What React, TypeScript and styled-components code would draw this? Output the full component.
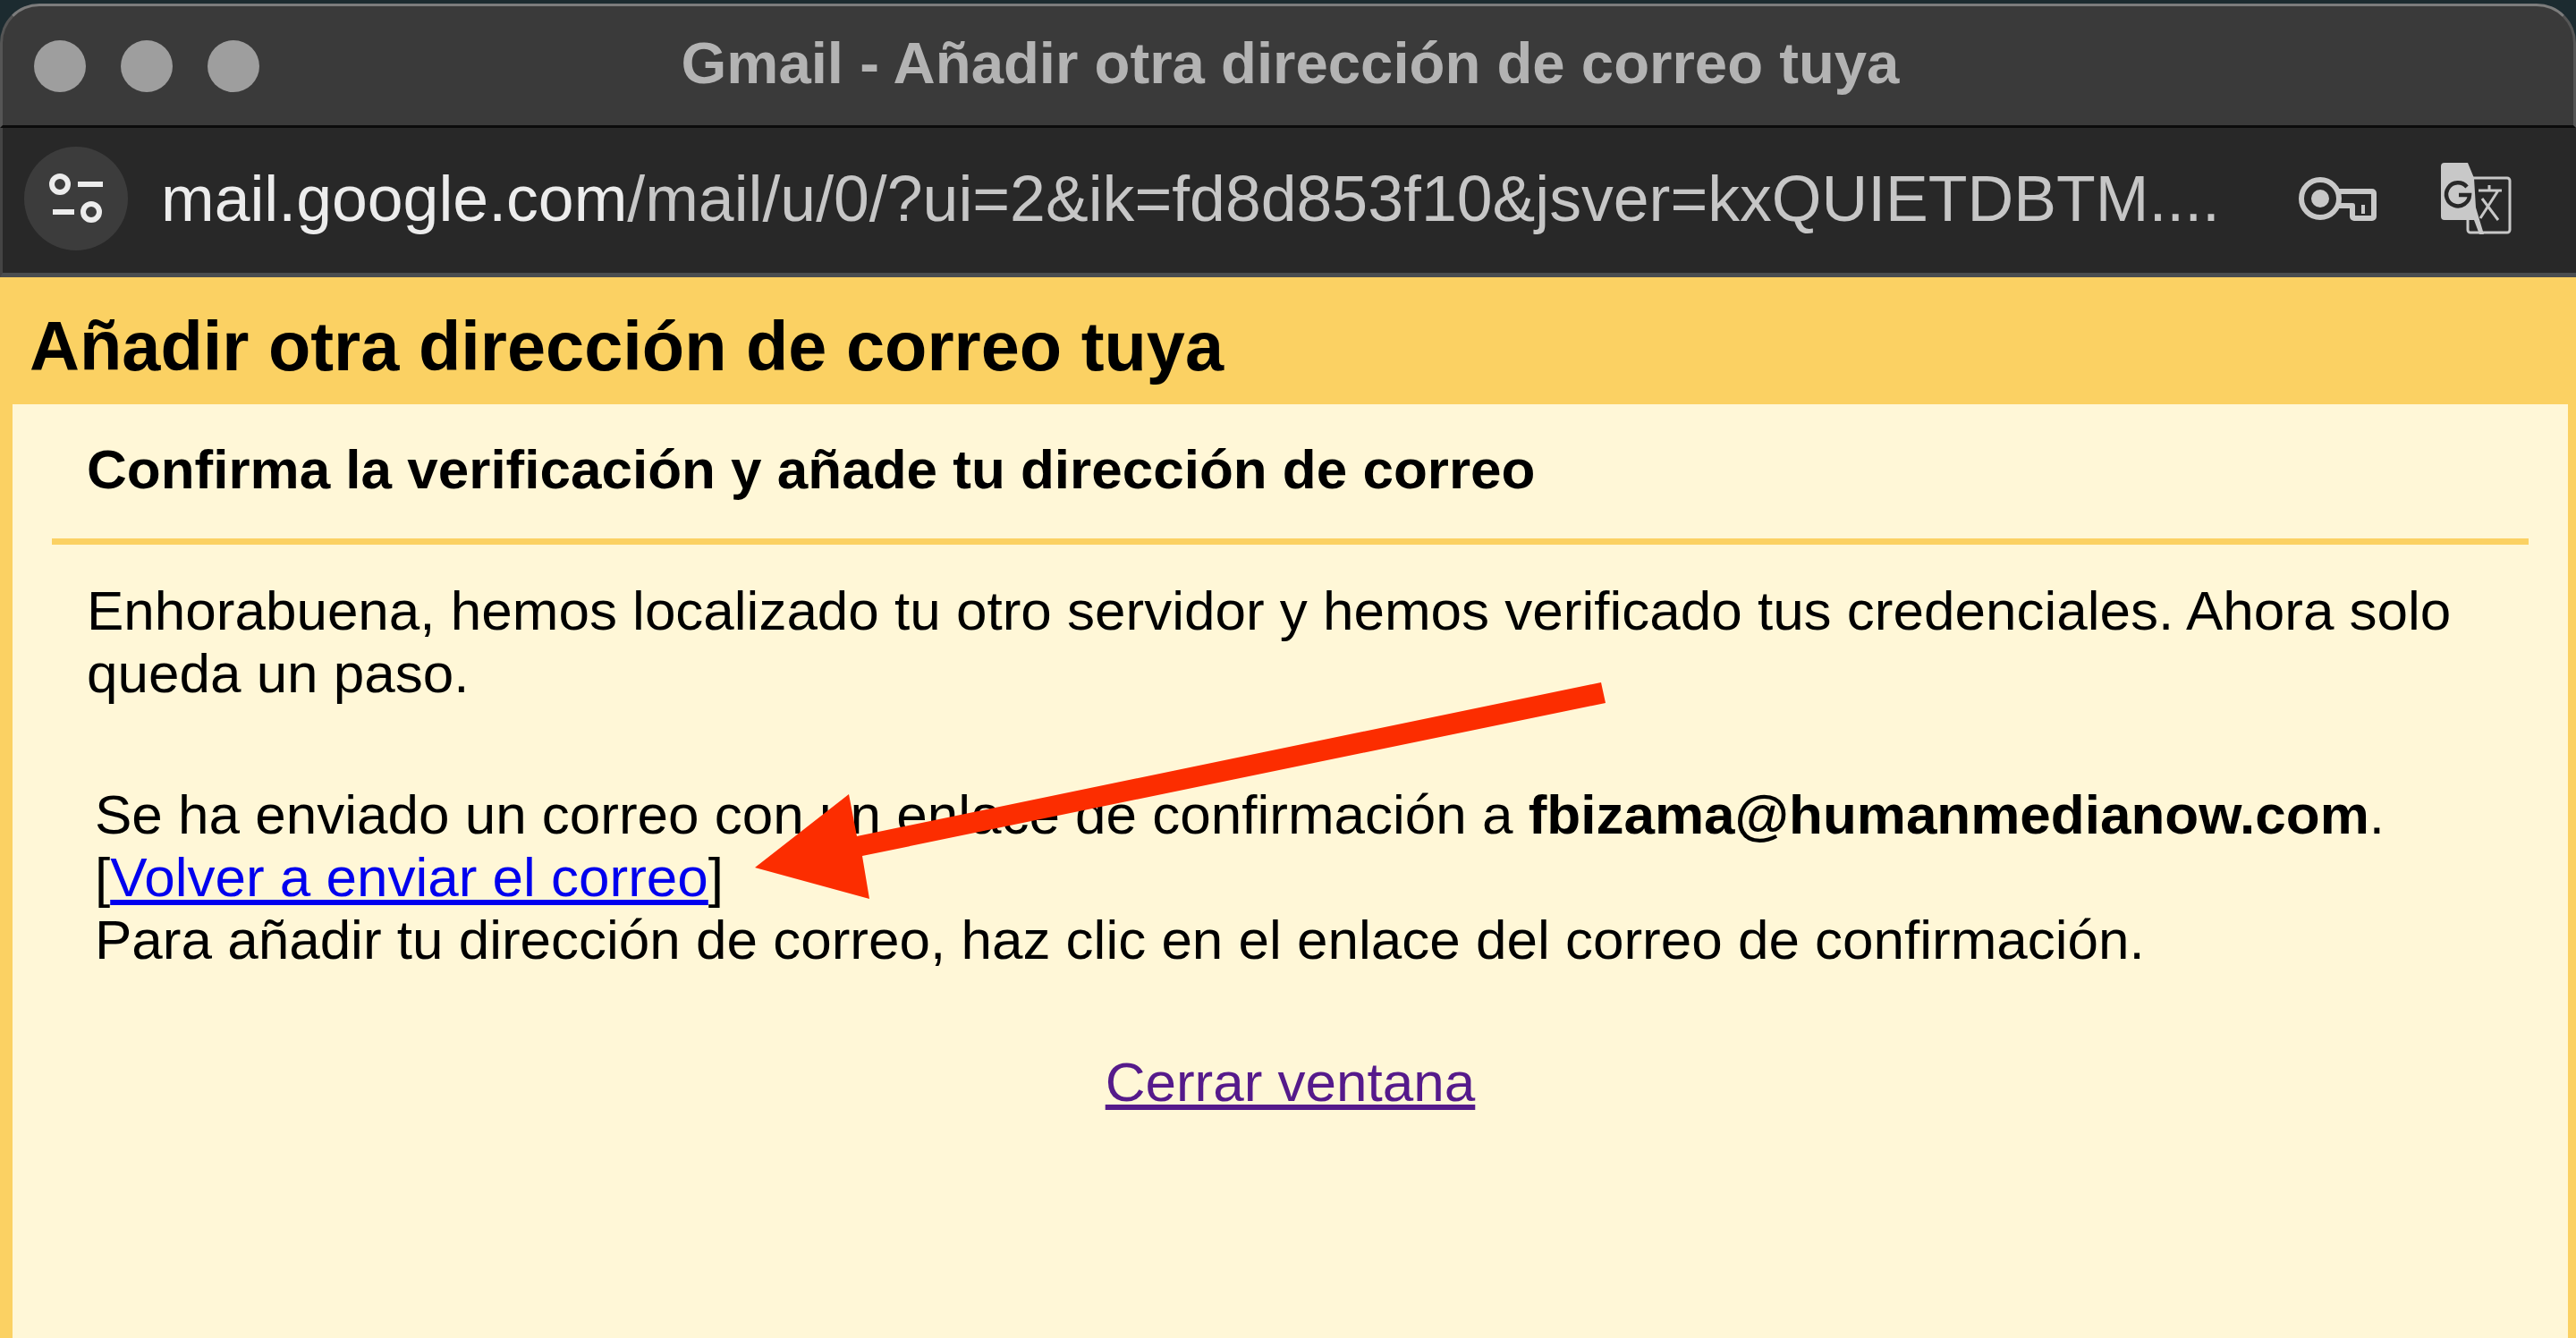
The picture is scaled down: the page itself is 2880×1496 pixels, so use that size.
import React from 'react';
import styled, { createGlobalStyle } from 'styled-components';

const GlobalStyle = createGlobalStyle`
  html, body {
    margin: 0;
    padding: 0;
    background: #1c2b30;
  }
  * {
    box-sizing: border-box;
  }
`;

const FONT = '"Liberation Sans", Arial, sans-serif';

// Whole browser popup
const BrowserWindow = styled.div`
  position: relative;
  width: 2880px;
  height: 1496px;
  overflow: hidden;
  display: flex;
  flex-direction: column;
  padding-top: 4px;
  font-family: ${FONT};
`;

const TitleBar = styled.div`
  flex: none;
  height: 139px;
  display: flex;
  align-items: center;
  padding: 0 38px;
  background: #3a3a3a;
  border-top: 3px solid #7c7c7c;
  border-left: 3px solid #555;
  border-right: 3px solid #555;
  border-bottom: 3px solid #0b0b0b;
  border-radius: 44px 44px 0 0;
`;

const Lights = styled.div`
  flex: none;
  display: flex;
  gap: 39px;
  margin-left: -3px;
`;

const Light = styled.span`
  display: block;
  width: 58px;
  height: 58px;
  border-radius: 50%;
  background: #9e9e9e;
`;

const WindowTitle = styled.div`
  flex: 1;
  text-align: center;
  padding: 0 244px 6px 0;
  font-size: 65.3px;
  font-weight: 700;
  color: #b3b3b3;
  white-space: nowrap;
`;

const Toolbar = styled.div`
  flex: none;
  height: 167px;
  display: flex;
  align-items: center;
  padding: 0 72px 5px 24px;
  background: #282828;
  border-bottom: 5px solid #4a4d4f;
  border-left: 3px solid #444;
`;

const SiteButton = styled.div`
  flex: none;
  width: 116px;
  height: 116px;
  border-radius: 50%;
  background: #3c3c3c;
  display: flex;
  align-items: center;
  justify-content: center;
`;

const UrlText = styled.div`
  flex: 1;
  margin-left: 37px;
  font-size: 71.6px;
  color: #c6c6c6;
  white-space: nowrap;
`;

const UrlHost = styled.span`
  color: #ececec;
`;

const ToolIcons = styled.div`
  flex: none;
  display: flex;
  align-items: center;
  gap: 72px;
`;

// Yellow frame round the dialog
const Frame = styled.div`
  flex: 1;
  display: flex;
  flex-direction: column;
  background: #fbd163;
  padding: 0 9px 0 14px;
`;

const DialogHeading = styled.h1`
  flex: none;
  height: 142px;
  margin: 0 0 0 19px;
  font-size: 77.5px;
  font-weight: 700;
  line-height: 154px;
  color: #000;
`;

const Content = styled.div`
  flex: 1;
  background: #fff7d7;
  color: #000;
  font-size: 62px;
  line-height: 70px;
`;

const SubHeading = styled.h2`
  margin: 0;
  height: 150px;
  padding: 38px 0 0 83px;
  font-size: 62px;
  line-height: 70px;
  font-weight: 700;
`;

const Divider = styled.div`
  height: 7px;
  margin: 0 44px;
  background: #fbd163;
`;

const Intro = styled.p`
  margin: 0;
  padding: 39px 60px 0 83px;
`;

const Notice = styled.div`
  padding: 88px 60px 0 92px;
`;

const NoticeLine = styled.div`
  white-space: nowrap;
`;

const Link = styled.a<{ $visited?: boolean }>`
  color: ${(props) => (props.$visited ? '#551a8b' : '#0000ee')};
  text-decoration: underline;
`;

const CloseRow = styled.div`
  margin-top: 89px;
  text-align: center;
`;

// Red annotation drawn over the dialog text
const ArrowOverlay = styled.svg`
  position: absolute;
  left: 0;
  top: 0;
  pointer-events: none;
`;

const TuneIcon = () => (
  <svg width="62" height="58" viewBox="0 0 62 58" fill="none" stroke="#ececec" strokeWidth="6">
    <circle cx="13" cy="13" r="9" />
    <path d="M33 13h28" />
    <path d="M5 44h24" />
    <circle cx="48" cy="44" r="9" />
  </svg>
);

const KeyIcon = () => (
  <svg width="87" height="50" viewBox="0 0 87 50" fill="none" stroke="#c8c8c8" strokeWidth="6">
    <circle cx="24" cy="25" r="21" />
    <circle cx="24" cy="25" r="10" fill="#c8c8c8" stroke="none" />
    <path d="M44 17h38a2 2 0 0 1 2 2v26a2 2 0 0 1-2 2H62a2 2 0 0 1-2-2V33H44" strokeLinejoin="round" />
    <path d="M72 32v10" strokeWidth="4" />
  </svg>
);

const TranslateIcon = () => (
  <svg width="79" height="80" viewBox="0 0 79 80" fill="none">
    <rect x="30" y="17" width="47" height="61" rx="3" stroke="#c8c8c8" strokeWidth="3" />
    <path
      d="M4 0H30L37 17L39 50L48 80H43L37 64H4a4 4 0 0 1-4-4V4a4 4 0 0 1 4-4Z"
      fill="#c8c8c8"
    />
    <path d="M29 27a13 13 0 1 0 3 9H20" stroke="#282828" strokeWidth="4.5" />
    <path d="M42 31h26M54 25v6M44 62l20-31M46 40l18 24" stroke="#c8c8c8" strokeWidth="3" />
  </svg>
);

const App = (): JSX.Element => (
  <BrowserWindow>
    <GlobalStyle />
    <TitleBar>
      <Lights>
        <Light />
        <Light />
        <Light />
      </Lights>
      <WindowTitle>Gmail - Añadir otra dirección de correo tuya</WindowTitle>
    </TitleBar>

    <Toolbar>
      <SiteButton>
        <TuneIcon />
      </SiteButton>
      <UrlText>
        <UrlHost>mail.google.com</UrlHost>
        /mail/u/0/?ui=2&amp;ik=fd8d853f10&amp;jsver=kxQUIETDBTM....
      </UrlText>
      <ToolIcons>
        <KeyIcon />
        <TranslateIcon />
      </ToolIcons>
    </Toolbar>

    <Frame>
      <DialogHeading>Añadir otra dirección de correo tuya</DialogHeading>
      <Content>
        <SubHeading>Confirma la verificación y añade tu dirección de correo</SubHeading>
        <Divider />
        <Intro>
          Enhorabuena, hemos localizado tu otro servidor y hemos verificado tus credenciales. Ahora solo
          queda un paso.
        </Intro>
        <Notice>
          <NoticeLine>
            Se ha enviado un correo con un enlace de confirmación a <b>fbizama@humanmedianow.com</b>.
          </NoticeLine>
          <NoticeLine>
            [<Link href="#">Volver a enviar el correo</Link>]
          </NoticeLine>
          <NoticeLine>Para añadir tu dirección de correo, haz clic en el enlace del correo de confirmación.</NoticeLine>
        </Notice>
        <CloseRow>
          <Link href="#" $visited>Cerrar ventana</Link>
        </CloseRow>
      </Content>
    </Frame>

    <ArrowOverlay width="2880" height="1496" viewBox="0 0 2880 1496">
      <polygon points="1790,763 1795,786 964,957 972,1005 844,970 949,888 958,935" fill="#fc2d00" />
    </ArrowOverlay>
  </BrowserWindow>
);

export default App;
